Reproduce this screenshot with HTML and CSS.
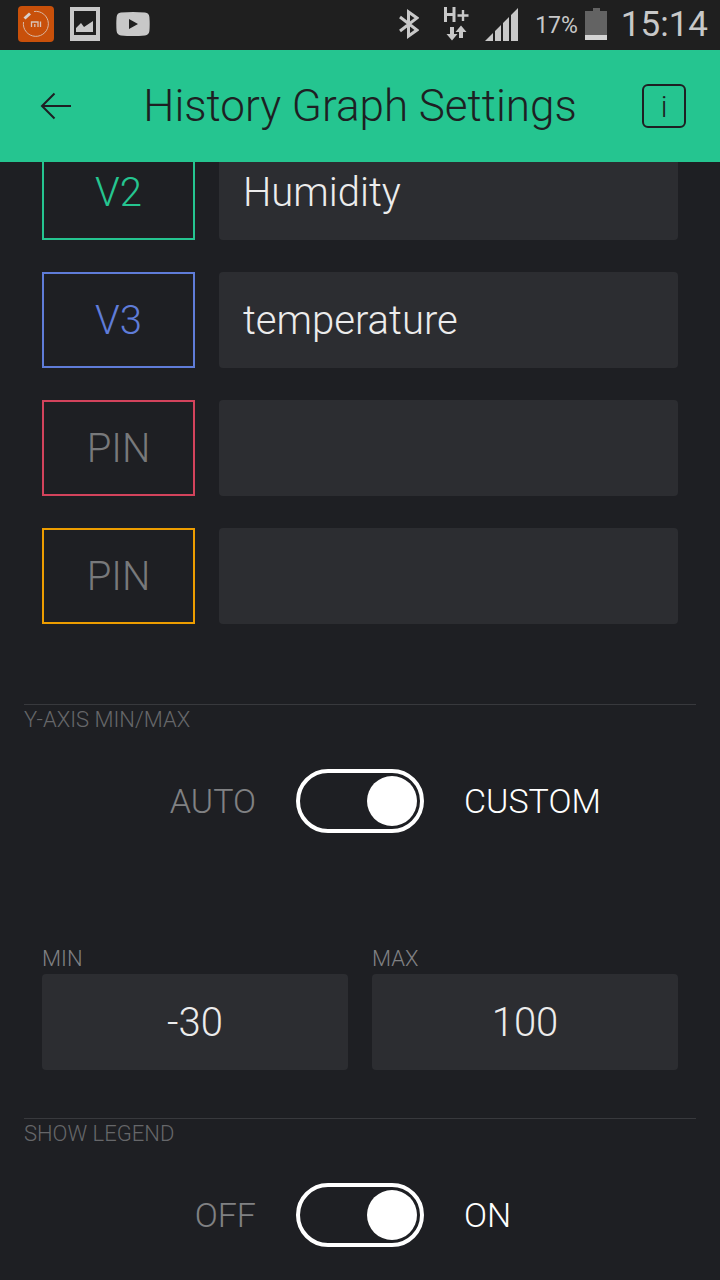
FILE: index.html
```html
<!DOCTYPE html>
<html lang="en">

<head>
    <meta charset="UTF-8">
    <meta name="viewport" content="width=device-width, initial-scale=1.0">
    <title>History Graph Settings</title>
    <link rel="stylesheet" href="styles.css">
</head>

<body>
    <div class="status-bar">
        <div class="status-left">
            <svg width="36" height="36" viewBox="0 0 36 36" fill="none">
                <rect width="36" height="36" rx="4" fill="#c8500a"/>
                <path d="M16 5.5A12.5 12.5 0 1 1 5.5 16" stroke="#d8b8a4" stroke-width="1"/>
                <path d="M6.500 12.500l5.500-5" stroke="#d8d0cc" stroke-width="3"/>
                <path d="M13.500 21v-5h6.500v5M16.800 18v3M22.500 15.500V21" stroke="#d8c4b8" stroke-width="1.300"/>
            </svg>
            <svg width="30" height="34" viewBox="0 0 30 34">
                <path fill="#c8c8c8" fill-rule="evenodd" d="M0 0h30v34H0zM4 4v24h22V4z"/>
                <path fill="#c8c8c8" d="M6 25v-4l5-5 3 4 9-6v11z"/>
            </svg>
            <svg width="34" height="24" viewBox="0 0 34 24">
                <path fill="#c8c8c8" fill-rule="evenodd" d="M5 .6Q17-.4 29 .6q4 .4 4.400 4.400.6 7 0 14-.4 4-4.400 4.400-12 1-24 0Q1 23 .6 19 0 12 .6 5 1 1 5 .6zM13 7v10l9-5z"/>
            </svg>
        </div>
        <div class="status-right">
            <svg class="bluetooth" width="20" height="32" viewBox="0 0 20 32" fill="none" stroke="#c8c8c8" stroke-width="3">
                <path d="M1 9l17 13-8.500 6V4L18 10 1 23"/>
            </svg>
            <svg class="network" width="26" height="34" viewBox="0 0 26 34">
                <path fill="none" stroke="#c8c8c8" stroke-width="3" d="M2.500 0v15M11 0v15M2.500 7.500H11"/>
                <path fill="none" stroke="#c8c8c8" stroke-width="2.400" d="M20 3v11M14.500 8.500h11"/>
                <path fill="#c8c8c8" d="M7 20h4v7h3.500L9 33.500 3.500 27H7zM16 31h4v-6h3.500L18 18.500 12.500 25H16z"/>
            </svg>
            <svg class="signal" width="33" height="33" viewBox="0 0 33 33">
                <path fill="#c8c8c8" d="M0 33l8-8v8zM10 33V23l6-6v16zM18 33V15l6-6v24zM26 33V7l7-7v33z"/>
            </svg>
            <span class="percent">17%</span>
            <svg class="battery" width="22" height="32" viewBox="0 0 22 32">
                <path fill="#636363" d="M8 0h7v3h7v24H0V3h8z"/>
                <path fill="#d4d4d4" d="M0 27h22v5H0z"/>
            </svg>
            <span class="clock">15:14</span>
        </div>
    </div>

    <header class="header">
        <button type="button" class="back" aria-label="Back">
            <svg width="32" height="28" viewBox="0 0 32 28" fill="none" stroke="#1e1f23" stroke-width="2">
                <path d="M31 14H2M14.500 1.500L2 14l12.500 12.500"/>
            </svg>
        </button>
        <h1>History Graph Settings</h1>
        <button type="button" class="info">i</button>
    </header>

    <main>
        <div class="pins">
            <div class="pin-row">
                <button type="button" class="pin green">V2</button>
                <input type="text" class="field" aria-label="V2 name" value="Humidity">
            </div>
            <div class="pin-row">
                <button type="button" class="pin blue">V3</button>
                <input type="text" class="field" aria-label="V3 name" value="temperature">
            </div>
            <div class="pin-row">
                <button type="button" class="pin red empty">PIN</button>
                <input type="text" class="field" aria-label="Pin name">
            </div>
            <div class="pin-row">
                <button type="button" class="pin orange empty">PIN</button>
                <input type="text" class="field" aria-label="Pin name">
            </div>
        </div>

        <section class="setting">
            <h2>Y-AXIS MIN/MAX</h2>
            <div class="switch-row">
                <span class="off">AUTO</span>
                <input type="checkbox" class="switch" id="axis" checked>
                <label for="axis">CUSTOM</label>
            </div>
            <div class="range">
                <div>
                    <label for="min">MIN</label>
                    <input type="text" class="field" id="min" value="-30">
                </div>
                <div>
                    <label for="max">MAX</label>
                    <input type="text" class="field" id="max" value="100">
                </div>
            </div>
        </section>

        <section class="setting">
            <h2>SHOW LEGEND</h2>
            <div class="switch-row">
                <span class="off">OFF</span>
                <input type="checkbox" class="switch" id="legend" checked>
                <label for="legend">ON</label>
            </div>
        </section>
    </main>
</body>

</html>
```
FILE: styles.css
```css
* {
    box-sizing: border-box;
}

body {
    margin: 0;
    background: #1e1f23;
    color: #fff;
    font-family: Roboto, "Liberation Sans", sans-serif;
    font-weight: 300;
}

button,
input {
    margin: 0;
    padding: 0;
    border: none;
    background: none;
    color: inherit;
    font: inherit;
}

svg {
    display: block;
}

.status-bar {
    display: flex;
    justify-content: space-between;
    align-items: center;
    height: 50px;
    padding: 0 12px 2px 18px;
    background: #1f1f1f;
    color: #c8c8c8;
}

.status-left,
.status-right {
    display: flex;
    align-items: center;
}

.status-left {
    gap: 16px;
}

.network {
    margin-left: 24px;
}

.signal {
    margin-left: 16px;
}

.percent {
    margin: 2px 7px 0 17px;
    font-size: 23px;
    font-weight: 400;
}

.clock {
    margin-left: 14px;
    font-size: 35px;
    font-weight: 400;
}

.header {
    position: relative;
    z-index: 1;
    display: flex;
    justify-content: space-between;
    align-items: center;
    height: 112px;
    padding: 0 34px 0 40px;
    background: #25c590;
    color: #1e1f23;
}

.back {
    width: 38px;
}

h1 {
    margin: 0;
    font-size: 44px;
    font-weight: 300;
}

.info {
    width: 44px;
    height: 44px;
    border: 2px solid #1e1f23;
    border-radius: 6px;
    font-size: 30px;
}

/* the list is scrolled a little way under the header */
.pins {
    display: flex;
    flex-direction: column;
    gap: 32px;
    margin-top: -18px;
    padding: 0 42px 80px;
}

.pin-row {
    display: grid;
    grid-template-columns: 1fr 3fr;
    gap: 24px;
}

.pin {
    height: 96px;
    border: 2px solid;
    font-size: 40px;
}

.green {
    border-color: #25c590;
    color: #25c590;
}

.blue {
    border-color: #5f7cd8;
    color: #5f7cd8;
}

.red {
    border-color: #d3435c;
}

.orange {
    border-color: #ed9d00;
}

.empty {
    color: #78797b;
}

.field {
    width: 100%;
    min-width: 0;
    height: 96px;
    padding: 0 24px;
    border-radius: 4px;
    background: #2c2d31;
    color: #ececec;
    font-size: 40px;
}

.setting {
    margin: 0 24px;
    border-top: 1px solid #38393d;
}

h2 {
    margin: 0;
    color: #66676a;
    font-size: 22px;
    font-weight: 300;
    line-height: 30px;
}

.switch-row {
    display: grid;
    grid-template-columns: 1fr 128px 1fr;
    gap: 40px;
    align-items: center;
    padding-top: 34px;
    font-size: 34px;
}

.off {
    color: #808183;
    text-align: right;
}

.switch {
    display: flex;
    justify-content: flex-end;
    align-items: center;
    width: 128px;
    height: 64px;
    padding: 0 3px;
    border: 4px solid #fff;
    border-radius: 32px;
    appearance: none;
}

.switch:not(:checked) {
    justify-content: flex-start;
}

.switch::before {
    content: "";
    width: 50px;
    height: 50px;
    border-radius: 50%;
    background: #fff;
}

.range {
    display: grid;
    grid-template-columns: 1fr 1fr;
    gap: 24px;
    padding: 111px 18px 48px;
}

.range label {
    display: block;
    color: #808183;
    font-size: 22px;
    line-height: 30px;
}

.range .field {
    display: block;
    text-align: center;
}
```
